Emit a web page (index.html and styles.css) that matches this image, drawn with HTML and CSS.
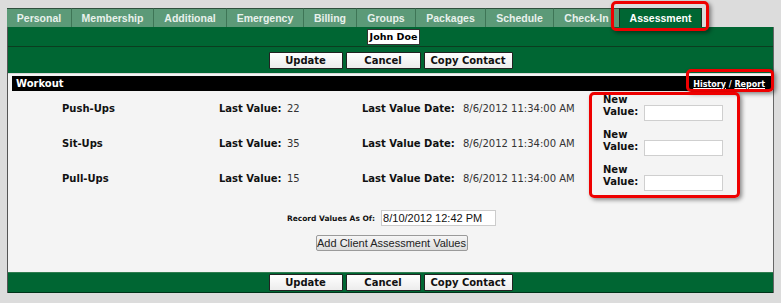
FILE: index.html
```html
<!DOCTYPE html>
<html lang="en">
<head>
    <meta charset="UTF-8">
    <meta name="viewport" content="width=device-width, initial-scale=1.0">
    <title>Client Assessment</title>
    <link rel="stylesheet" href="styles.css">
</head>
<body>
    <div class="page">
        <div class="tabs">
            <div class="tab t-personal">Personal</div>
            <div class="tab t-membership">Membership</div>
            <div class="tab t-additional">Additional</div>
            <div class="tab t-emergency">Emergency</div>
            <div class="tab t-billing">Billing</div>
            <div class="tab t-groups">Groups</div>
            <div class="tab t-packages">Packages</div>
            <div class="tab t-schedule">Schedule</div>
            <div class="tab t-checkin">Check-In</div>
            <div class="tab t-assessment active">Assessment</div>
        </div>
        <div class="panel">
            <div class="name-row">
                <span class="name-box">John Doe</span>
            </div>
            <div class="btn-row top">
                <button class="btn b-update">Update</button>
                <button class="btn b-cancel">Cancel</button>
                <button class="btn b-copy">Copy Contact</button>
            </div>
            <div class="content">
                <div class="section-head">
                    <span class="section-title">Workout</span>
                    <span class="links"><a href="#">History</a> / <a href="#">Report</a></span>
                </div>
                <div class="rows">
                    <div class="row">
                        <div class="ex-name">Push-Ups</div>
                        <div class="lbl">Last Value:</div>
                        <div class="val">22</div>
                        <div class="lbl">Last Value Date:</div>
                        <div class="val">8/6/2012 11:34:00 AM</div>
                        <div class="nv-lbl">New<br>Value:</div>
                        <div class="nv-ipt"><input type="text"></div>
                    </div>
                    <div class="row">
                        <div class="ex-name">Sit-Ups</div>
                        <div class="lbl">Last Value:</div>
                        <div class="val">35</div>
                        <div class="lbl">Last Value Date:</div>
                        <div class="val">8/6/2012 11:34:00 AM</div>
                        <div class="nv-lbl">New<br>Value:</div>
                        <div class="nv-ipt"><input type="text"></div>
                    </div>
                    <div class="row">
                        <div class="ex-name">Pull-Ups</div>
                        <div class="lbl">Last Value:</div>
                        <div class="val">15</div>
                        <div class="lbl">Last Value Date:</div>
                        <div class="val">8/6/2012 11:34:00 AM</div>
                        <div class="nv-lbl">New<br>Value:</div>
                        <div class="nv-ipt"><input type="text"></div>
                    </div>
                </div>
                <div class="record">
                    <span class="record-lbl">Record Values As Of:</span>
                    <input class="record-ipt" type="text" value="8/10/2012 12:42 PM">
                </div>
                <div class="add">
                    <button class="add-btn">Add Client Assessment Values</button>
                </div>
            </div>
            <div class="btn-row bottom">
                <button class="btn b-update">Update</button>
                <button class="btn b-cancel">Cancel</button>
                <button class="btn b-copy">Copy Contact</button>
            </div>
        </div>

        <!-- red annotation boxes -->
        <div class="mark mark-tab"></div>
        <div class="mark mark-links"></div>
        <div class="mark mark-values"></div>
    </div>
</body>
</html>
```

FILE: styles.css
```css
* {
    margin: 0;
    padding: 0;
    box-sizing: border-box;
}
body {
    background-color: #dcdcdc;
    font-family: "DejaVu Sans", Verdana, sans-serif;
    font-size: 10px;
    color: #111;
}
.page {
    position: relative;
    padding: 8px 0 0 7px;
    width: 781px;
    height: 303px;
}

/* Tabs */
.tabs {
    display: flex;
    height: 19px;
}
.tab {
    height: 19px;
    background-color: #5c9a78;
    color: #e8f1ec;
    font-family: "Liberation Sans", Arial, sans-serif;
    font-weight: bold;
    font-size: 10.5px;
    text-align: center;
    line-height: 18px;
    border-top: 1px solid #2f4f3d;
    border-right: 1px solid #3e7556;
}
.t-personal { width: 65px; }
.t-membership { width: 82px; }
.t-additional { width: 73px; }
.t-emergency { width: 77px; }
.t-billing { width: 53px; }
.t-groups { width: 59px; }
.t-packages { width: 70px; }
.t-schedule { width: 68px; }
.t-checkin { width: 65px; border-right: none; }
.tab.active {
    width: 83px;
    background-color: #006633;
    color: #fff;
    border: 1px solid #1b2f23;
    border-bottom: none;
}

/* Panel */
.panel {
    width: 767px;
    border-left: 1px solid #555;
    border-right: 1px solid #666;
}
.name-row {
    height: 20px;
    background-color: #006633;
    border-bottom: 1px solid #0b3d20;
    display: flex;
    justify-content: center;
    align-items: center;
}
.name-box {
    display: block;
    width: 53px;
    height: 16px;
    margin-left: 6px;
    background-color: #fff;
    border: 1px solid #333;
    font-weight: bold;
    font-size: 9.5px;
    line-height: 14px;
    text-align: center;
    white-space: nowrap;
    color: #000;
}
.btn-row {
    display: flex;
    justify-content: center;
    align-items: center;
    gap: 3px;
    background-color: #006633;
}
.btn-row.top {
    height: 26px;
    padding-top: 1px;
}
.btn-row.bottom {
    height: 21px;
    border-top: 1px solid #2f7d50;
    border-bottom: 1px solid #00331a;
}
.btn {
    height: 17px;
    font-family: "DejaVu Sans", Verdana, sans-serif;
    font-weight: bold;
    font-size: 10px;
    color: #111;
    background: linear-gradient(#ffffff, #ececec);
    border: 1px solid #222;
    border-radius: 1px;
}
.b-update { width: 74px; }
.b-cancel { width: 75px; }
.b-copy { width: 89px; }

/* Content */
.content {
    background-color: #f4f4f4;
    border-top: 1px solid #d8d8d8;
    padding: 2px 2px 21px 4px;
}
.section-head {
    height: 15px;
    background-color: #000;
    display: flex;
    justify-content: space-between;
    align-items: center;
    color: #fff;
}
.section-title {
    font-weight: bold;
    font-size: 10px;
    padding-left: 4px;
}
.links {
    font-size: 8px;
    font-weight: bold;
    padding-right: 6px;
    padding-top: 1px;
}
.links a {
    color: #fff;
}
.rows {
    padding-left: 50px;
}
.row {
    display: grid;
    grid-template-columns: 157px 68px 75px 101px 140px 41px 80px;
    align-items: center;
    height: 35px;
}
.ex-name, .lbl {
    font-weight: bold;
}
.val {
    color: #333;
}
.nv-lbl {
    font-weight: bold;
    line-height: 12px;
    margin-top: -5px;
}
.nv-ipt {
    margin-top: 8px;
}
.nv-ipt input {
    display: block;
    width: 79px;
    height: 16px;
    border: 1px solid #cfcfcf;
    background-color: #fff;
}
.record {
    display: flex;
    justify-content: center;
    align-items: center;
    gap: 6px;
    margin-top: 14px;
}
.record-lbl {
    font-weight: bold;
    font-size: 7.5px;
}
.record-ipt {
    width: 115px;
    height: 16px;
    border: 1px solid #ccc;
    background-color: #fff;
    font-family: "Liberation Sans", Arial, sans-serif;
    font-size: 11px;
    padding-left: 1px;
    color: #111;
}
.add {
    display: flex;
    justify-content: center;
    margin-top: 9px;
}
.add-btn {
    width: 152px;
    height: 16px;
    font-family: "Liberation Sans", Arial, sans-serif;
    font-size: 11px;
    color: #222;
    background: linear-gradient(#f6f6f6, #dcdcdc);
    border: 1px solid #9a9a9a;
    border-radius: 2px;
}

/* Red highlight overlays */
.mark {
    position: absolute;
    border: 3px solid #ee0000;
    border-radius: 5px;
    box-shadow: 2px 2px 4px rgba(0, 0, 0, 0.45);
}
.mark-tab {
    left: 611px;
    top: 1px;
    width: 98px;
    height: 30px;
}
.mark-links {
    left: 686px;
    top: 69px;
    width: 88px;
    height: 23px;
}
.mark-values {
    left: 589px;
    top: 92px;
    width: 151px;
    height: 106px;
}
```
